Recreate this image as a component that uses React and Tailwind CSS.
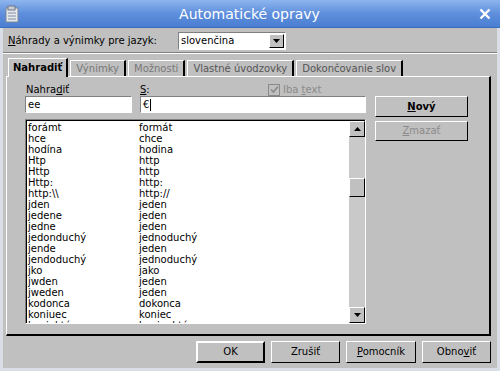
import React from 'react';

const rows = [
  ['forámt', 'formát'],
  ['hce', 'chce'],
  ['hodína', 'hodina'],
  ['Htp', 'http'],
  ['Http', 'http'],
  ['Http:', 'http:'],
  ['http:\\\\', 'http://'],
  ['jden', 'jeden'],
  ['jedene', 'jeden'],
  ['jedne', 'jeden'],
  ['jedonduchý', 'jednoduchý'],
  ['jende', 'jeden'],
  ['jendoduchý', 'jednoduchý'],
  ['jko', 'jako'],
  ['jwden', 'jeden'],
  ['jweden', 'jeden'],
  ['kodonca', 'dokonca'],
  ['koniuec', 'koniec'],
  ['konjuktúra', 'konjunktúra'],
];

const raised = 'border border-t-white border-l-white border-r-black border-b-black';
const sunken = 'border border-t-[#808080] border-l-[#808080] border-r-white border-b-white';

function Btn({ children, className = '', disabled }) {
  return (
    <div className={`${raised} flex items-center justify-center bg-[#c0c0c0] ${disabled ? 'text-[#8a8a8a]' : 'text-black'} ${className}`}>
      {children}
    </div>
  );
}

function Arrow({ up }) {
  return (
    <div className={`${raised} h-[16px] w-full flex items-center justify-center bg-[#c0c0c0]`}>
      <svg width="7" height="4" viewBox="0 0 7 4">
        {up ? <polygon points="0,4 7,4 3.5,0" fill="#000" /> : <polygon points="0,0 7,0 3.5,4" fill="#000" />}
      </svg>
    </div>
  );
}

function Tab({ children, active, dim }) {
  return (
    <div
      className={
        active
          ? 'h-[19px] -mb-px z-10 px-[4px] flex items-center border-t border-l border-t-white border-l-white border-r-2 border-r-black bg-[#c0c0c0] font-bold text-black'
          : `h-[16px] px-[5px] flex items-center border-t border-l border-t-white border-l-white border-r-2 border-r-black bg-[#c0c0c0] ${dim ? 'text-[#787878]' : 'text-[#555]'}`
      }
    >
      {children}
    </div>
  );
}

export default function App() {
  return (
    <div className="w-[500px] h-[371px] flex flex-col bg-[#c0c0c0] text-[10px] leading-none text-black overflow-hidden" style={{ fontFamily: '"DejaVu Sans", sans-serif' }}>
      <div className="h-[28px] flex items-center px-[5px] bg-gradient-to-b from-[#8db5ee] via-[#5f8fdc] to-[#4a7ed2] border-b border-[#3d6cb8]">
        <svg width="15" height="18" viewBox="0 0 15 18">
          <rect x="1" y="3" width="12" height="14" fill="#e6e9ee" stroke="#7d8796" />
          <rect x="3" y="1" width="7" height="4" fill="#c9ced6" stroke="#6f7886" />
          <line x1="3" y1="8" x2="11" y2="8" stroke="#7f8c9e" />
          <line x1="3" y1="11" x2="11" y2="11" stroke="#7f8c9e" />
          <line x1="3" y1="14" x2="11" y2="14" stroke="#7f8c9e" />
        </svg>
        <div className="flex-1 text-center text-white text-[14px]">Automatické opravy</div>
        <svg width="12" height="12" viewBox="0 0 12 12" className="mr-[4px]">
          <path d="M1.5 1.5 L10.5 10.5 M10.5 1.5 L1.5 10.5" stroke="#fff" strokeWidth="2.4" />
        </svg>
      </div>

      <div className="flex-1 flex flex-col border-x-[3px] border-b-[3px] border-[#d9dee6]">
        <div className="h-[18px] mt-[4px] flex items-center pl-[5px]">
          <span className="w-[170px]"><u>N</u>áhrady a výnimky pre jazyk:</span>
          <div className={`${sunken} w-[108px] h-[18px] bg-white flex items-center`}>
            <span className="flex-1 pl-[2px]">slovenčina</span>
            <div className="w-[15px] h-[14px] mr-px flex items-center justify-center bg-[#c0c0c0] border border-t-white border-l-white border-r-black border-b-black">
              <svg width="7" height="4" viewBox="0 0 7 4"><polygon points="0,0 7,0 3.5,4" fill="#000" /></svg>
            </div>
          </div>
        </div>
        <div className="mt-[2px] border-t border-t-[#808080] border-b border-b-white" />

        <div className="flex items-end pl-[5px] mt-[4px] gap-[2px]">
          <Tab active>Nahradiť</Tab>
          <Tab dim>Výnimky</Tab>
          <Tab dim>Možnosti</Tab>
          <Tab>Vlastné úvodzovky</Tab>
          <Tab>Dokončovanie slov</Tab>
        </div>

        <div className="ml-[3px] w-[485px] h-[260px] border-t border-l border-t-white border-l-white border-r-2 border-b-2 border-r-black border-b-black flex gap-[9px] pl-[18px] pt-[6px]">
          <div className="w-[341px] flex flex-col">
            <div className="h-[13px] flex items-center">
              <span className="w-[115px] pl-px">Nahra<u>d</u>iť</span>
              <span className="w-[128px]"><u>S</u>:</span>
              <span className="flex items-center gap-[3px] text-[#8a8a8a]">
                <span className="w-[12px] h-[12px] border border-[#8a8a8a] bg-[#c0c0c0] flex items-center justify-center">
                  <svg width="9" height="9" viewBox="0 0 9 9"><path d="M1 4.5 L3.5 7 L8 1.5" stroke="#8a8a8a" strokeWidth="1.6" fill="none" /></svg>
                </span>
                <span>Iba <u>t</u>ext</span>
              </span>
            </div>
            <div className="flex gap-[8px]">
              <div className={`${sunken} w-[107px] h-[17px] bg-white flex items-center pl-[2px]`}>ee</div>
              <div className={`${sunken} flex-1 h-[17px] bg-white flex items-center pl-[2px]`}>
                €<span className="ml-[1px] w-px h-[12px] bg-black" />
              </div>
            </div>
            <div className={`${sunken} mt-[6px] h-[205px] bg-white flex`}>
              <div className="flex-1 overflow-hidden pt-[1px] pl-px border-t border-l border-black">
                {rows.map(([a, b]) => (
                  <div key={a} className="h-[11px] flex items-center">
                    <span className="w-[111px]">{a}</span>
                    <span>{b}</span>
                  </div>
                ))}
              </div>
              <div className="w-[16px] flex flex-col bg-[#c9c9c9] border-t border-black">
                <Arrow up />
                <div className="h-[41px]" />
                <div className={`${raised} h-[19px] bg-[#c0c0c0]`} />
                <div className="flex-1" />
                <Arrow />
              </div>
            </div>
          </div>
          <div className="w-[93px] flex flex-col gap-[4px] pt-[13px]">
            <Btn className="h-[21px]"><span className="font-semibold"><u>N</u>ový</span></Btn>
            <Btn className="h-[20px]" disabled><span><u>Z</u>mazať</span></Btn>
          </div>
        </div>

        <div className="mt-[5px] flex justify-end gap-[6px] pr-[6px]">
          <Btn className="h-[22px] w-[69px] border-2 border-t-white border-l-white border-r-black border-b-black">OK</Btn>
          <Btn className="h-[22px] w-[69px]">Zrušiť</Btn>
          <Btn className="h-[22px] w-[70px]"><span><u>P</u>omocník</span></Btn>
          <Btn className="h-[22px] w-[69px]"><span>Obno<u>v</u>iť</span></Btn>
        </div>
      </div>
    </div>
  );
}
